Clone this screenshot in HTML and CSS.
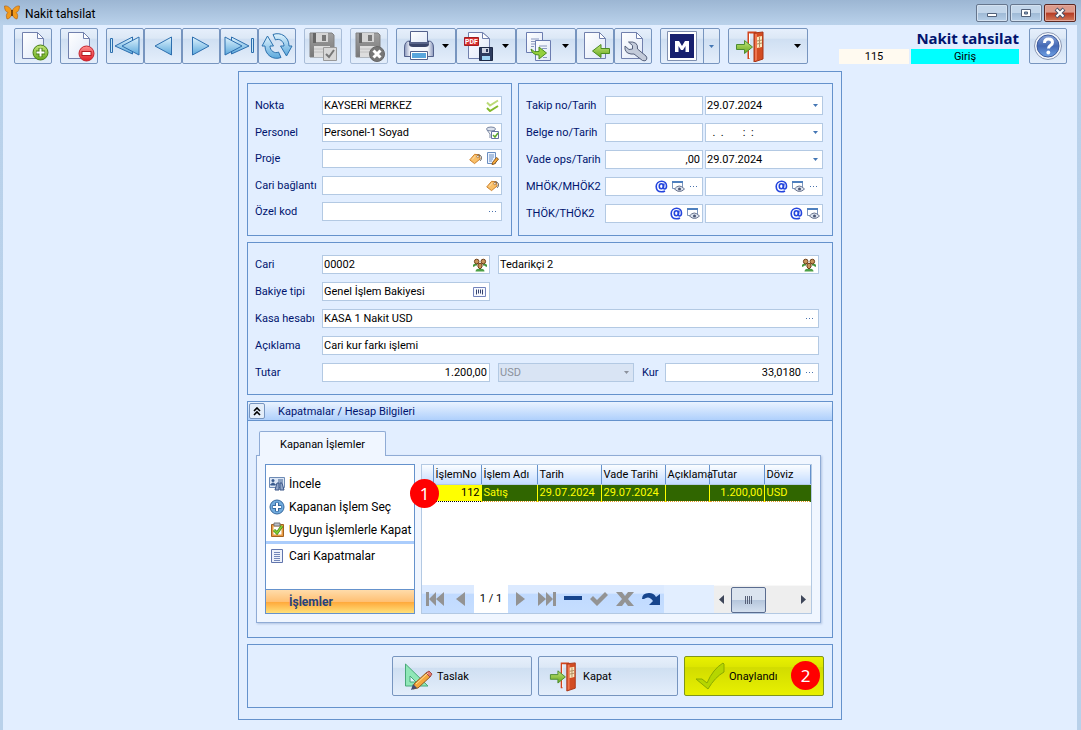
FILE: index.html
```html
<!DOCTYPE html>
<html lang="tr">
<head>
<meta charset="utf-8">
<title>Nakit tahsilat</title>
<link rel="stylesheet" href="styles.css">
</head>
<body>
<svg class="defs" aria-hidden="true">
  <defs>
    <linearGradient id="g-page" x1="0" y1="0" x2="1" y2="1"><stop offset="0" stop-color="#fff"/><stop offset="1" stop-color="#dfe8f8"/></linearGradient>
    <linearGradient id="g-blue" x1="0" y1="0" x2="0" y2="1"><stop offset="0" stop-color="#dff3fd"/><stop offset="1" stop-color="#5ba8dc"/></linearGradient>
    <linearGradient id="g-green" x1="0" y1="0" x2="0" y2="1"><stop offset="0" stop-color="#c3e57a"/><stop offset="1" stop-color="#67a81c"/></linearGradient>
    <linearGradient id="g-red" x1="0" y1="0" x2="0" y2="1"><stop offset="0" stop-color="#ff8f8f"/><stop offset="1" stop-color="#e01c24"/></linearGradient>
    <linearGradient id="g-gray" x1="0" y1="0" x2="0" y2="1"><stop offset="0" stop-color="#a0a0a0"/><stop offset="1" stop-color="#777"/></linearGradient>
    <linearGradient id="g-help" x1="0" y1="0" x2="0" y2="1"><stop offset="0" stop-color="#8aa5da"/><stop offset=".5" stop-color="#4468b4"/><stop offset="1" stop-color="#6fa2e6"/></linearGradient>
    <linearGradient id="g-print" x1="0" y1="0" x2="1" y2="0"><stop offset="0" stop-color="#8a97bb"/><stop offset=".2" stop-color="#f5f7fc"/><stop offset=".8" stop-color="#f5f7fc"/><stop offset="1" stop-color="#8a97bb"/></linearGradient>
  </defs>
  <symbol id="page" viewBox="0 0 32 32"><path d="M5.500 2.500h15l6 6v20h-21z" fill="url(#g-page)" stroke="#7180ad"/><path d="M20.500 2.500v6h6z" fill="#fff" stroke="#7180ad"/></symbol>
  <symbol id="disk" viewBox="0 0 26 26"><path d="M1 1h22l2 2v22H1z" fill="url(#g-gray)" stroke="#818181"/><path d="M6 1h13v9H6z" fill="#d5d5d5"/><path d="M4 1h3v10H4z" fill="#666"/><path d="M13 3h4v6h-4z" fill="#777"/><path d="M5 14h16v11H5z" fill="#ddd"/><path d="M5 17h16M5 20h16" stroke="#c0c0c0"/></symbol>
  <symbol id="door" viewBox="0 0 32 32"><path d="M13.500 29V2.500h8" fill="none" stroke="#d2441c" stroke-width="2"/><path d="M14.500 28V3.500" stroke="#fff"/><path d="M19 3l9-1v27l-9 3z" fill="#d24c22" stroke="#a93516"/><path d="M20 4l2 0v26l-2 1z" fill="#ee7550"/><path d="M22 7l5-1v11l-5 1z" fill="#fbe8bd"/><path d="M24.500 7v10M22 11l5-1M22 14l5-1" stroke="#b08c60"/><path d="M1.500 14.500h8v-4l8 6.500-8 6.500v-4h-8z" fill="url(#g-green)" stroke="#4b8c32"/></symbol>
  <symbol id="left" viewBox="0 0 32 32"><path d="M24.500 7v18L8 16z" fill="url(#g-blue)" stroke="#2d6eae"/></symbol>
  <symbol id="first" viewBox="0 0 32 32"><path d="M1.500 8.500h2v14h-2z" fill="#c9e8f8" stroke="#2d6eae"/><path d="M23.500 7v17L6 16z" fill="url(#g-blue)" stroke="#2d6eae"/><path d="M30 7v18L13 16z" fill="url(#g-blue)" stroke="#2d6eae"/></symbol>
  <symbol id="tag" viewBox="0 0 14 14"><path d="M.8 8.500L6 2.500l5 .5 1 4.500-6 5z" fill="#f9bf68" stroke="#c97b25"/><path d="M9 3.500c4-1.500 6 3 3 6" fill="none" stroke="#444"/><circle cx="9.500" cy="5" r="1.200" fill="#fff" stroke="#80501e" stroke-width=".6"/><path d="M3.500 8l3-3.500" stroke="#fee3b1"/></symbol>
  <symbol id="people" viewBox="0 0 14 14"><path d="M0 8.500q1-2 4-2M14 8.500q-1-2-4-2" fill="none" stroke="#44963b" stroke-width="2"/><circle cx="3.700" cy="3.500" r="2.300" fill="#c9955c" stroke="#6d3f18"/><circle cx="10.300" cy="3.500" r="2.300" fill="#c9955c" stroke="#6d3f18"/><path d="M2.500 13.500q0-3 4.500-3t4.500 3z" fill="#4ca046"/><path d="M5 6q2-1.500 4 0v3l-2 2-2-2z" fill="#c9955c" stroke="#6d3f18"/></symbol>
  <symbol id="at" viewBox="0 0 13 13"><path d="M9 3.500L8.500 7q-.3 2 1 2c2 0 2-2 2-3 0-3-2-4.800-4.800-4.800C3.500 1.200 1.200 3.500 1.200 6.500c0 3.300 2.200 5.300 5.300 5.300q2 0 3.500-.8" fill="none" stroke="#2445de" stroke-width="1.600"/><ellipse cx="6.300" cy="6.300" rx="2" ry="2.500" fill="none" stroke="#2445de" stroke-width="1.600"/></symbol>
  <symbol id="eye" viewBox="0 0 13 13"><path d="M.5 1.500h10v7H.5z" fill="#fff" stroke="#7c96bd"/><path d="M0 1h11v2H0z" fill="#4f80be"/><path d="M2.500 9q4.500-6 10 0-5 5-10 0z" fill="#dce3ee" stroke="#6b7690"/><circle cx="7.500" cy="9" r="1.500" fill="#4b5674"/></symbol>
  <symbol id="dots" viewBox="0 0 9 3"><path d="M1 1h1v1H1zM4 1h1v1H4zM7 1h1v1H7z" fill="#4a72ad"/></symbol>
  <symbol id="caret" viewBox="0 0 7 4"><path d="M0 0h7L3.500 4z" fill="currentColor"/></symbol>
</svg>

<div class="window">
  <header class="titlebar">
    <svg class="logo" viewBox="0 0 16 15"><path d="M8 6C6 2 3 .5.500 1c0 4 1.500 6 3.500 6.500C2 9 2 11.500 3 14c2 0 4-2 5-5 1 3 3 5 5 5 1-2.500 1-5-1-6.500C14 7 15.500 5 15.500 1 13 .5 10 2 8 6z" fill="#f29a1c" stroke="#a85a10" stroke-width=".6"/><path d="M7.300 5h1.400v6H7.300z" fill="#4f2606"/></svg>
    <span class="caption">Nakit tahsilat</span>
    <div class="winbtns">
      <button class="winbtn" aria-label="Küçült"><svg width="12" height="12"><path d="M1.500 6.500h9v3h-9z" fill="#fff" stroke="#51617a"/></svg></button>
      <button class="winbtn" aria-label="Büyüt"><svg width="12" height="12"><path d="M1.500 2.500h9v7h-9z" fill="#fff" stroke="#51617a"/><path d="M4.500 5h3v2h-3z" fill="#8ba8c8" stroke="#51617a"/></svg></button>
      <button class="winbtn close" aria-label="Pencereyi kapat"><svg width="12" height="12"><path d="M2 2l8 8M10 2l-8 8" stroke="#4d5368" stroke-width="4"/><path d="M2.500 2.500l7 7M9.500 2.500l-7 7" stroke="#fff" stroke-width="2"/></svg></button>
    </div>
  </header>

  <div class="client">
    <div class="toolbar">
      <div class="tools">
        <button class="tool" aria-label="Yeni"><svg class="i32" viewBox="0 0 32 32"><use href="#page"/><circle cx="23.500" cy="22.500" r="7.500" fill="url(#g-green)" stroke="#467e13"/><path d="M23.500 18v9M19 22.500h9" stroke="#467e13" stroke-width="4"/><path d="M23.500 18.500v8M19.500 22.500h8" stroke="#fff" stroke-width="2"/></svg></button>
        <button class="tool" aria-label="Sil"><svg class="i32" viewBox="0 0 32 32"><use href="#page"/><circle cx="23.500" cy="23.500" r="7.500" fill="url(#g-red)" stroke="#c42530"/><path d="M18.500 23.500h10" stroke="#b51820" stroke-width="5"/><path d="M19.500 23.500h8" stroke="#fff" stroke-width="3"/></svg></button>
        <div class="group">
          <button class="tool" aria-label="İlk"><svg class="i32"><use href="#first"/></svg></button>
          <button class="tool" aria-label="Önceki"><svg class="i32"><use href="#left"/></svg></button>
          <button class="tool" aria-label="Sonraki"><svg class="i32 flip"><use href="#left"/></svg></button>
          <button class="tool" aria-label="Son"><svg class="i32 flip"><use href="#first"/></svg></button>
          <button class="tool" aria-label="Yenile"><svg class="i32" viewBox="0 0 32 32"><path d="M12 4.500C20 1.500 28 7 28 16h3L25.500 26 19.500 16H23c0-5-5-8-8.500-6z" fill="url(#g-blue)" stroke="#2d72ae"/><path d="M20 27.500C12 30.500 4 25 4 16H1L6.500 6l6 10H9c0 5 5 8 8.500 6z" fill="url(#g-blue)" stroke="#2d72ae"/></svg></button>
        </div>
        <button class="tool off" aria-label="Kaydet" disabled><svg class="i32" viewBox="0 0 32 32"><use href="#disk" x="2" y="2" width="26" height="26"/><path d="M16.500 17.500h13v13h-13z" fill="#d8d8d8" stroke="#999"/><path d="M19 24l3 3 5-7" fill="none" stroke="#777" stroke-width="2"/></svg></button>
        <button class="tool off" aria-label="Kaydet ve kapat" disabled><svg class="i32" viewBox="0 0 32 32"><use href="#disk" x="2" y="2" width="26" height="26"/><circle cx="24" cy="24" r="7.500" fill="#777" stroke="#666"/><path d="M20.500 20.500l7 7M27.500 20.500l-7 7" stroke="#fff" stroke-width="3"/></svg></button>
        <div class="group">
          <button class="tool drop" aria-label="Yazdır"><svg class="i32" viewBox="0 0 32 32"><path d="M1.500 18q0-7 5-7h19q5 0 5 7v8.500h-29z" fill="url(#g-print)" stroke="#53618c"/><path d="M6 11h20v3q0 3-4 3H10q-4 0-4-3z" fill="#3a4569"/><path d="M7.500 1.500h17V13h-17z" fill="url(#g-page)" stroke="#53618c"/><path d="M6 13h20" stroke="#59658a" stroke-width="2"/><path d="M7.500 21.500h17v8h-17z" fill="#fff" stroke="#53618c"/><path d="M9 23h14v5H9z" fill="#58a5dc"/></svg><svg class="caret"><use href="#caret"/></svg></button>
          <button class="tool drop" aria-label="PDF kaydet"><svg class="i32" viewBox="0 0 32 32"><path d="M5.500 2.500h14l7 6v20h-21z" fill="url(#g-page)" stroke="#7180ad"/><path d="M19.500 2.500v6h7z" fill="#fff" stroke="#7180ad"/><path d="M1.500 7.500h14v8h-14z" fill="#d62f2f" stroke="#a31d1d"/><text x="2" y="14" class="pdf">PDF</text><path d="M16.500 17.500h13v13h-13z" fill="#2d3b5d" stroke="#1d2945"/><path d="M19 18h7v5h-7z" fill="#cfd5e2"/><path d="M23 19h2v3h-2z" fill="#2d3b5d"/><path d="M19 26h8v4h-8z" fill="#9fd4f4"/></svg><svg class="caret"><use href="#caret"/></svg></button>
          <button class="tool drop" aria-label="Kopyala"><svg class="i32" viewBox="0 0 32 32"><path d="M3.500 2.500h16v20h-16z" fill="url(#g-page)" stroke="#6b7cb0"/><path d="M8 9h8M8 11.500h8M8 14h4M8 16.500h3" stroke="#8a98be"/><path d="M12.500 10.500h15v20h-15z" fill="url(#g-page)" stroke="#6b7cb0"/><path d="M16 16h8M19 18.500h5M20 27.500h4" stroke="#8a98be"/><path d="M8 19q3 4 8 2.500V17l7.500 6-7.500 6v-4q-7 0-8-6z" fill="#94cf3c" stroke="#4b8c20"/></svg><svg class="caret"><use href="#caret"/></svg></button>
          <button class="tool" aria-label="Geri al"><svg class="i32" viewBox="0 0 32 32"><use href="#page"/><path d="M30.500 18.500H22v-4L13.500 21l8.500 6.500v-4h8.500z" fill="url(#g-green)" stroke="#4b8c20"/></svg></button>
          <button class="tool" aria-label="Ayarlar"><svg class="i32" viewBox="0 0 32 32"><use href="#page" x="-1"/><path d="M11.500 12l4 3.500v3.500l-3.500.5-4-3.500q-1 7 6 8h3l8.500 6.500q3 1 4-.8t-.5-3.700L20.500 19q1-8-9-7z" fill="#c3cbda" stroke="#56617c"/></svg></button>
        </div>
        <button class="tool split" aria-label="M"><svg class="i32" viewBox="0 0 32 32"><path d="M1.500 1.500h29v29h-29z" fill="#fff" stroke="#8090b0"/><path d="M4 4h24v24H4z" fill="#17206e"/><path d="M9 22V11h4l3 5 3-5h4v11h-3.500v-6L17 20h-2l-2.500-4v6z" fill="#fff"/></svg><span class="part"><svg class="smallcaret"><use href="#caret"/></svg></span></button>
        <button class="tool wide" aria-label="Çıkış"><svg class="i32"><use href="#door"/></svg><svg class="caret"><use href="#caret"/></svg></button>
      </div>
      <div class="docinfo">
        <h1>Nakit tahsilat</h1>
        <div class="docline"><span class="docno">115</span><span class="docstate">Giriş</span></div>
      </div>
      <button class="tool" aria-label="Yardım"><svg class="i32" viewBox="0 0 32 32"><circle cx="16" cy="16" r="13.500" fill="#f4f7fc" stroke="#8b98b4"/><circle cx="16" cy="16" r="11" fill="url(#g-help)" stroke="#3d5b9d"/><path d="M12.500 13q0-4 4-4t4 3.500c0 3-4 2.500-4 6" fill="none" stroke="#fff" stroke-width="3"/><circle cx="16.300" cy="22.500" r="1.900" fill="#fff"/></svg></button>
    </div>

    <main class="panel">
      <div class="columns">
        <section class="box left">
          <div class="row"><label for="nokta">Nokta</label><div class="field"><input id="nokta" value="KAYSERİ MERKEZ"><svg class="i13" viewBox="0 0 13 13"><path d="M1 3.500l3 3 8-5" fill="none" stroke="#bada77" stroke-width="2"/><path d="M1 9l3 3 8-5" fill="none" stroke="#82b92d" stroke-width="2"/></svg></div></div>
          <div class="row"><label for="personel">Personel</label><div class="field"><input id="personel" value="Personel-1 Soyad"><svg class="i13" viewBox="0 0 13 13"><ellipse cx="5" cy="3" rx="4.500" ry="2" fill="#dce2ed" stroke="#7886a2"/><path d="M1 4l3 4v4M9 4L7 6" fill="none" stroke="#7886a2"/><path d="M5.500 5.500h7v7h-7z" fill="#fff" stroke="#6674a2"/><path d="M7 9l2 2 3-4" fill="none" stroke="#5da72b" stroke-width="1.500"/></svg></div></div>
          <div class="row"><label for="proje">Proje</label><div class="field"><input id="proje"><svg class="i13"><use href="#tag"/></svg><svg class="i13" viewBox="0 0 13 13"><path d="M1.500.5h8v11h-8z" fill="#edf4ff" stroke="#6a8ec1"/><path d="M3 3h5M3 5h5M3 7h4M3 9h3" stroke="#6a8ec1"/><path d="M6.500 10.500l4-5 2 1.500-4 5-2.500.5z" fill="#f5aa3a" stroke="#8b5820"/></svg></div></div>
          <div class="row"><label for="baglanti">Cari bağlantı</label><div class="field"><input id="baglanti"><svg class="i13"><use href="#tag"/></svg></div></div>
          <div class="row"><label for="ozel">Özel kod</label><div class="field more"><input id="ozel"><svg class="dots"><use href="#dots"/></svg></div></div>
        </section>
        <section class="box right">
          <div class="row"><label for="takip">Takip no/Tarih</label><div class="field"><input id="takip"></div><div class="field more"><input value="29.07.2024" aria-label="Takip tarihi"><svg class="smallcaret"><use href="#caret"/></svg></div></div>
          <div class="row"><label for="belge">Belge no/Tarih</label><div class="field"><input id="belge"></div><div class="field more"><input value="  .  .       :  :" aria-label="Belge tarihi"><svg class="smallcaret"><use href="#caret"/></svg></div></div>
          <div class="row"><label for="vade">Vade ops/Tarih</label><div class="field"><input id="vade" class="num" value=",00"></div><div class="field more"><input value="29.07.2024" aria-label="Vade tarihi"><svg class="smallcaret"><use href="#caret"/></svg></div></div>
          <div class="row"><label for="mhok">MHÖK/MHÖK2</label><div class="field more"><input id="mhok"><svg class="i13"><use href="#at"/></svg><svg class="i13"><use href="#eye"/></svg><svg class="dots"><use href="#dots"/></svg></div><div class="field more"><input aria-label="MHÖK2"><svg class="i13"><use href="#at"/></svg><svg class="i13"><use href="#eye"/></svg><svg class="dots"><use href="#dots"/></svg></div></div>
          <div class="row"><label for="thok">THÖK/THÖK2</label><div class="field"><input id="thok"><svg class="i13"><use href="#at"/></svg><svg class="i13"><use href="#eye"/></svg></div><div class="field"><input aria-label="THÖK2"><svg class="i13"><use href="#at"/></svg><svg class="i13"><use href="#eye"/></svg></div></div>
        </section>
      </div>

      <section class="box account">
        <div class="row"><label for="cari">Cari</label><div class="field code"><input id="cari" value="00002"><svg class="i14"><use href="#people"/></svg></div><div class="field"><input value="Tedarikçi 2" aria-label="Cari adı"><svg class="i14"><use href="#people"/></svg></div></div>
        <div class="row"><label for="bakiye">Bakiye tipi</label><div class="field code"><input id="bakiye" value="Genel İşlem Bakiyesi"><svg class="i14" viewBox="0 0 14 14"><path d="M.5 2.500h12v9H.5z" fill="#f7f9ff" stroke="#7383bb"/><path d="M3.500 4.500v5M5.500 4.500v4M7.500 4.500v4M9.500 4.500v5" stroke="#36436e"/></svg></div></div>
        <div class="row"><label for="kasa">Kasa hesabı</label><div class="field more"><input id="kasa" value="KASA 1 Nakit USD"><svg class="dots"><use href="#dots"/></svg></div></div>
        <div class="row"><label for="aciklama">Açıklama</label><div class="field"><input id="aciklama" value="Cari kur farkı işlemi"></div></div>
        <div class="row"><label for="tutar">Tutar</label><div class="field code"><input id="tutar" class="num" value="1.200,00"></div><div class="field disabled more"><select disabled aria-label="Döviz"><option>USD</option></select><svg class="smallcaret"><use href="#caret"/></svg></div><label class="kur" for="kur">Kur</label><div class="field more rate"><input id="kur" class="num" value="33,0180"><svg class="dots"><use href="#dots"/></svg></div></div>
      </section>

      <section class="box closings">
        <div class="sechead"><button class="collapse" aria-label="Daralt"><svg width="8" height="9"><path d="M1 4l3-3 3 3M1 8l3-3 3 3" fill="none" stroke="#000" stroke-width="1.600"/></svg></button><h2>Kapatmalar / Hesap Bilgileri</h2></div>
        <div class="secbody">
          <button class="tab">Kapanan İşlemler</button>
          <div class="tabpage">
            <nav class="actions">
              <a href="#"><svg class="i16" viewBox="0 0 16 16"><path d="M.5 1.500h15v10H.5z" fill="#dbe6f5" stroke="#6e8bb5"/><circle cx="4" cy="4.500" r="1.500" fill="#395a8e"/><path d="M1.500 9q2.500-4 5 0zM9 4h5M9 6h5" fill="#395a8e" stroke="#395a8e"/><path d="M6 14l2-7h2v7zM11 14V7h2l2 7z" fill="#91a6c8" stroke="#3b5688"/></svg>İncele</a>
              <a href="#"><svg class="i16" viewBox="0 0 16 16"><circle cx="8" cy="8" r="7" fill="#71abdd" stroke="#37699e"/><path d="M8 3.500v9M3.500 8h9" stroke="#37699e" stroke-width="4"/><path d="M8 4v8M4 8h8" stroke="#fff" stroke-width="2"/></svg>Kapanan İşlem Seç</a>
              <a href="#"><svg class="i16" viewBox="0 0 16 16"><path d="M2.500 2.500h12v12h-12z" fill="#e99b42" stroke="#a36220"/><path d="M4.500 4.500h8v8h-8z" fill="#fff"/><path d="M5 1h6v3H5z" fill="#b9bec8" stroke="#777"/><path d="M5 8l3 3 5-7" fill="none" stroke="#3f8915" stroke-width="3"/><path d="M5 8l3 3 5-7" fill="none" stroke="#88cd31" stroke-width="1.500"/></svg>Uygun İşlemlerle Kapat</a>
              <hr>
              <a href="#"><svg class="i16" viewBox="0 0 16 16"><path d="M2.500 1.500h11v13h-11z" fill="#eef2fb" stroke="#6175ad"/><path d="M5 4.500h6M5 6.500h6M5 8.500h6M5 10.500h6M5 12.500h6" stroke="#7387b9"/></svg>Cari Kapatmalar</a>
              <strong>İşlemler</strong>
            </nav>
            <div class="grid">
              <table>
                <colgroup><col class="c0"><col class="c1"><col class="c2"><col class="c3"><col class="c3"><col class="c4"><col class="c5"><col></colgroup>
                <thead><tr><th></th><th>İşlemNo</th><th>İşlem Adı</th><th>Tarih</th><th>Vade Tarihi</th><th>Açıklama</th><th>Tutar</th><th>Döviz</th></tr></thead>
                <tbody><tr><td></td><td class="key num">112</td><td>Satış</td><td>29.07.2024</td><td>29.07.2024</td><td></td><td class="num">1.200,00</td><td>USD</td></tr></tbody>
              </table>
              <span class="badge one">1</span>
              <div class="pager">
                <button aria-label="İlk kayıt"><svg class="nav" viewBox="0 0 20 16"><path d="M1 1h3v14H1zM11 1v14L4 8zM19 1v14l-8-7z"/></svg></button>
                <button aria-label="Önceki kayıt"><svg class="nav" viewBox="0 0 20 16"><path d="M14 1v14L5 8z"/></svg></button>
                <span class="pos">1 / 1</span>
                <button aria-label="Sonraki kayıt"><svg class="nav" viewBox="0 0 20 16"><path d="M5 1v14l9-7z"/></svg></button>
                <button aria-label="Son kayıt"><svg class="nav" viewBox="0 0 20 16"><path d="M19 1h-3v14h3zM9 1v14l7-7zM1 1v14l8-7z"/></svg></button>
                <button aria-label="Kaydı sil"><svg class="nav dark" viewBox="0 0 20 16"><path d="M1 5h18v4H1z"/></svg></button>
                <button aria-label="Onayla"><svg class="nav" viewBox="0 0 20 16"><path d="M1 8l3-3 4 4 8-8 3 3L8 15z"/></svg></button>
                <button aria-label="Vazgeç"><svg class="nav" viewBox="0 0 20 16"><path d="M1 1h6l3 4 3-4h6l-6 7 6 7h-6l-3-4-3 4H1l6-7z"/></svg></button>
                <button aria-label="Kaydı yenile"><svg class="nav dark" viewBox="0 0 20 16"><path d="M1 8q0-6 7-6 5 0 7 4l4-3v11H8l4-4q-4-6-9-2z"/></svg></button>
                <div class="scroll"><svg width="5" height="9"><path d="M5 0v9L0 4.500z" fill="#3e4659"/></svg><span class="thumb"></span><svg width="5" height="9"><path d="M0 0v9l5-4.500z" fill="#3e4659"/></svg></div>
              </div>
            </div>
          </div>
        </div>
      </section>

      <footer class="box commands">
        <button class="cmd"><svg class="i30" viewBox="0 0 30 30"><path d="M2.500 3v22H25z" fill="#8fe7b7" stroke="#48a878"/><path d="M7 15v6h6z" fill="#e8f4ff" stroke="#48a878"/><path d="M11 23L24 11l4 4-13 12-5 1z" fill="#f5a73c" stroke="#915a25"/><path d="M23 12l3-2 3 3-2 3z" fill="#e87c72" stroke="#a04f48"/><path d="M13 23l12-11" stroke="#ffe19b"/><path d="M8 29l2-6 4 4z" fill="#444c72"/></svg>Taslak</button>
        <button class="cmd"><svg class="i30"><use href="#door"/></svg>Kapat</button>
        <button class="cmd ok"><svg class="i30" viewBox="0 0 30 30"><path d="M1 18h6l5 4Q18 8 28 2l1 1v8Q20 16 13 28z" fill="#b6d600" stroke="#8baa00"/></svg>Onaylandı<span class="badge two">2</span></button>
      </footer>
    </main>
  </div>
</div>
</body>
</html>
```
FILE: styles.css
```css
* { box-sizing: border-box; }
body {
  margin: 0;
  font-family: Roboto, "Noto Sans", sans-serif;
  font-size: 11px;
  color: #000;
}
.defs { position: absolute; width: 0; height: 0; }
button, input, select { font: inherit; color: inherit; margin: 0; }
button { padding: 0; }
h1, h2 { margin: 0; }
svg { flex: none; display: block; }

.window {
  min-height: 100vh;
  display: flex;
  flex-direction: column;
  padding: 0 4px 0 3px;
  background: linear-gradient(#9cb6d3, #bad2eb 25px, #b9d1ea);
}
.titlebar {
  height: 25px;
  display: flex;
  align-items: center;
  gap: 5px;
  padding: 0 1px;
  font-size: 12px;
}
.logo { width: 16px; height: 15px; }
.caption { flex: 1; padding-top: 2px; }
.winbtns { display: flex; gap: 2px; }
.winbtn {
  width: 32px;
  height: 18px;
  display: grid;
  place-items: center;
  border: 1px solid #66768d;
  border-radius: 2px;
  background: linear-gradient(#c3d6ea 50%, #9eb9d5 50%, #b7cfe8);
  box-shadow: inset 0 0 0 1px #d4e2f1;
}
.winbtn.close {
  border-color: #5b2722;
  background: linear-gradient(#dc9a8b 45%, #b53b24 50%, #d27a5a);
  box-shadow: inset 0 0 0 1px #e3aa9d;
}

.client { flex: 1; background: #e2eeff; }
.toolbar {
  display: flex;
  align-items: flex-start;
  padding: 3px 10px 7px 11px;
}
.tools { flex: 1; display: flex; gap: 8px; }
.group { display: flex; }
.tool {
  width: 38px;
  height: 36px;
  display: flex;
  align-items: center;
  justify-content: center;
  border: 1px solid #7795bf;
  border-radius: 2px;
  background: linear-gradient(#e6effb, #dce8f6 27%, #cfdff2 30%, #e4eefb);
}
.tool.off { border-color: #a9bdd8; }
.tool.drop { width: 60px; gap: 7px; }
.tool.split { width: 60px; justify-content: flex-start; padding-left: 5px; gap: 5px; }
.part { flex: 1; align-self: stretch; display: grid; place-items: center; border-left: 1px solid #7795bf; }
.tool.wide { width: 80px; justify-content: space-between; padding: 0 6px; }
.i32 { width: 32px; height: 32px; }
.i30 { width: 30px; height: 32px; }
.i16 { width: 16px; height: 16px; }
.i14 { width: 14px; height: 14px; }
.i13 { width: 13px; height: 13px; }
.flip { transform: scaleX(-1); }
.caret { width: 7px; height: 4px; color: #000; }
.smallcaret { width: 5px; height: 3px; color: #4376b4; }
.dots { width: 9px; height: 3px; }
.pdf { font: bold 7px Roboto, sans-serif; fill: #fff; }

.docinfo { margin-right: 10px; }
.docinfo h1 {
  font: bold 15px/21px "Noto Sans", sans-serif;
  color: #00146e;
  text-align: right;
}
.docline { display: flex; gap: 2px; }
.docno, .docstate { height: 15px; line-height: 16px; text-align: center; }
.docno { width: 70px; background: #fffaf0; }
.docstate { width: 108px; background: #0ff; }

.panel {
  max-width: 604px;
  margin: 0 auto;
  padding: 11px 8px;
  display: flex;
  flex-direction: column;
  gap: 6px;
  border: 1px solid #6592cc;
}
.box { border: 1px solid #6592cc; }
.columns { display: grid; grid-template-columns: 265fr 315fr; gap: 6px; }
.left, .right, .account { display: flex; flex-direction: column; justify-content: space-between; }
.left { padding: 12px 9px 14px 7px; }
.right { padding: 12px 9px 12px 7px; gap: 8px; }
.account { padding: 12px 13px 12px 7px; gap: 8px; }
.row { display: flex; align-items: center; gap: 2px; }
.row label { width: 65px; flex: none; color: #00146e; white-space: nowrap; }
.right .row label { width: 77px; }
.account .row { gap: 8px; }
.account .row label { width: 59px; }
.account .row label.kur { width: 15px; }
.field {
  flex: 1;
  min-width: 0;
  height: 19px;
  display: flex;
  align-items: center;
  gap: 4px;
  padding: 0 2px 0 1px;
  border: 1px solid #b3c9e3;
  background: #fff;
}
.field.more { padding-right: 4px; }
.right .field:nth-child(2) { flex: 0 1 98px; }
.field.code { flex: 0 1 168px; }
.field.rate { flex: 0 1 154px; }
.field.disabled { background: #d9e4f4; color: #8b919c; }
.disabled .smallcaret { color: #8b919c; }
.field input, .field select {
  flex: 1;
  width: 0;
  min-width: 0;
  height: 17px;
  padding: 0;
  border: 0;
  outline: 0;
  background: transparent;
  appearance: none;
  opacity: 1;
}
.field input { white-space: pre; }
.num { text-align: right; }

.sechead {
  display: flex;
  align-items: center;
  gap: 13px;
  height: 19px;
  padding-left: 1px;
  border-bottom: 1px solid #6592cc;
  background: linear-gradient(#eaf3ff, #afd0fc);
}
.sechead h2 { font-size: 11px; font-weight: normal; color: #00146e; }
.collapse {
  width: 16px;
  height: 16px;
  display: grid;
  place-items: center;
  border: 1px solid #7795bf;
  border-radius: 2px;
  background: #e3edf9;
}
.secbody { padding: 10px 11px 14px 8px; }
.tab {
  position: relative;
  display: block;
  width: 127px;
  height: 25px;
  margin: 0 0 -1px 3px;
  border: 1px solid #8fabd5;
  border-bottom: 0;
  border-radius: 2px 2px 0 0;
  background: #f0f6ff;
}
.tabpage {
  display: flex;
  gap: 6px;
  padding: 8px;
  border: 1px solid #8fabd5;
  background: #f0f6ff;
  box-shadow: 1px 1px 2px #b0c4e2;
}
.actions {
  width: 150px;
  display: flex;
  flex-direction: column;
  border: 1px solid #6592cc;
  background: #fff;
  padding-top: 7px;
  font-size: 12px;
}
.actions a {
  height: 23px;
  display: flex;
  align-items: center;
  gap: 4px;
  padding-left: 3px;
  color: #000;
  text-decoration: none;
  white-space: nowrap;
}
.actions hr { width: 100%; height: 3px; margin: 0; border: 0; background: #abcdfc; }
.actions strong {
  height: 24px;
  margin-top: auto;
  padding-left: 23px;
  line-height: 24px;
  color: #27437c;
  border-top: 1px solid #6592cc;
  background: linear-gradient(#ffdcaa, #ffc074 50%, #ffa83a 52%, #ffe07a);
}
.grid {
  position: relative;
  flex: 1;
  min-width: 0;
  min-height: 150px;
  display: flex;
  flex-direction: column;
  border: 1px solid #b3c9e3;
  background: #fff;
}
table { width: 100%; table-layout: fixed; border-collapse: collapse; }
.c0 { width: 11px; }
.c1 { width: 48px; }
.c2 { width: 56px; }
.c3 { width: 64px; }
.c4 { width: 44px; }
.c5 { width: 55px; }
th, td { padding: 0 1px 0 2px; height: 19px; white-space: nowrap; }
th {
  font-weight: normal;
  text-align: left;
  border-right: 1px solid #6592cc;
  border-bottom: 1px solid #b3c9e3;
  background: linear-gradient(#fbfdff, #c4dcff);
}
td {
  height: 17px;
  color: #ff0;
  background: #306600;
  border-right: 1px solid #ff0;
  border-top: 1px dotted #e79a24;
  border-bottom: 1px dotted #e79a24;
}
td:last-child { border-right-color: #306600; }
td:first-child { background: #fff; border-color: #fff; }
td.num { text-align: right; }
td.key { color: #000; background: #ff0; border-color: #000; border-right-color: #ff0; }
.pager {
  display: flex;
  align-items: center;
  height: 28px;
  margin-top: auto;
  background: linear-gradient(#dceaff 30%, #c0daff 31%, #c6deff) left / 242px 28px no-repeat #e2eeff;
}
.pager button { width: 26px; height: 28px; display: grid; place-items: center; border: 0; background: none; }
.nav { width: 20px; height: 16px; fill: #939393; }
.nav.dark { fill: #17458d; }
.pos { width: 34px; line-height: 28px; text-align: center; background: #fff; }
.scroll {
  flex: 1;
  height: 28px;
  display: flex;
  align-items: center;
  margin-left: 50px;
  padding: 0 5px;
  gap: 7px;
  background: #eee;
  border-top: 1px solid #f8f8f8;
}
.scroll svg:last-child { margin-left: auto; }
.thumb {
  width: 35px;
  height: 26px;
  border: 1px solid #5a6c8f;
  border-radius: 2px;
  background:
    repeating-linear-gradient(90deg, #566078 0 1px, transparent 1px 2px) center / 8px 8px no-repeat,
    linear-gradient(#dbe4ef 50%, #b5c6dc 51%, #d4e0ef);
}
.badge {
  position: absolute;
  width: 29px;
  height: 29px;
  border-radius: 50%;
  background: #f00;
  color: #fff;
  font: 17px/29px "Noto Sans", sans-serif;
  text-align: center;
}
.badge.one { left: -12px; top: 14px; }
.badge.two { right: 3px; top: 4px; }

.commands {
  display: flex;
  justify-content: flex-end;
  gap: 6px;
  padding: 11px 8px;
}
.cmd {
  position: relative;
  width: 140px;
  height: 40px;
  display: flex;
  align-items: center;
  gap: 4px;
  padding-left: 10px;
  border: 1px solid #7795bf;
  border-radius: 2px;
  background: linear-gradient(#e6effb, #dce8f6 27%, #cfdff2 30%, #e4eefb);
}
.cmd.ok {
  border-color: #7f961c;
  background: linear-gradient(#e9f100, #dde600 25%, #d2dc00 28%, #e8f000);
}
```
